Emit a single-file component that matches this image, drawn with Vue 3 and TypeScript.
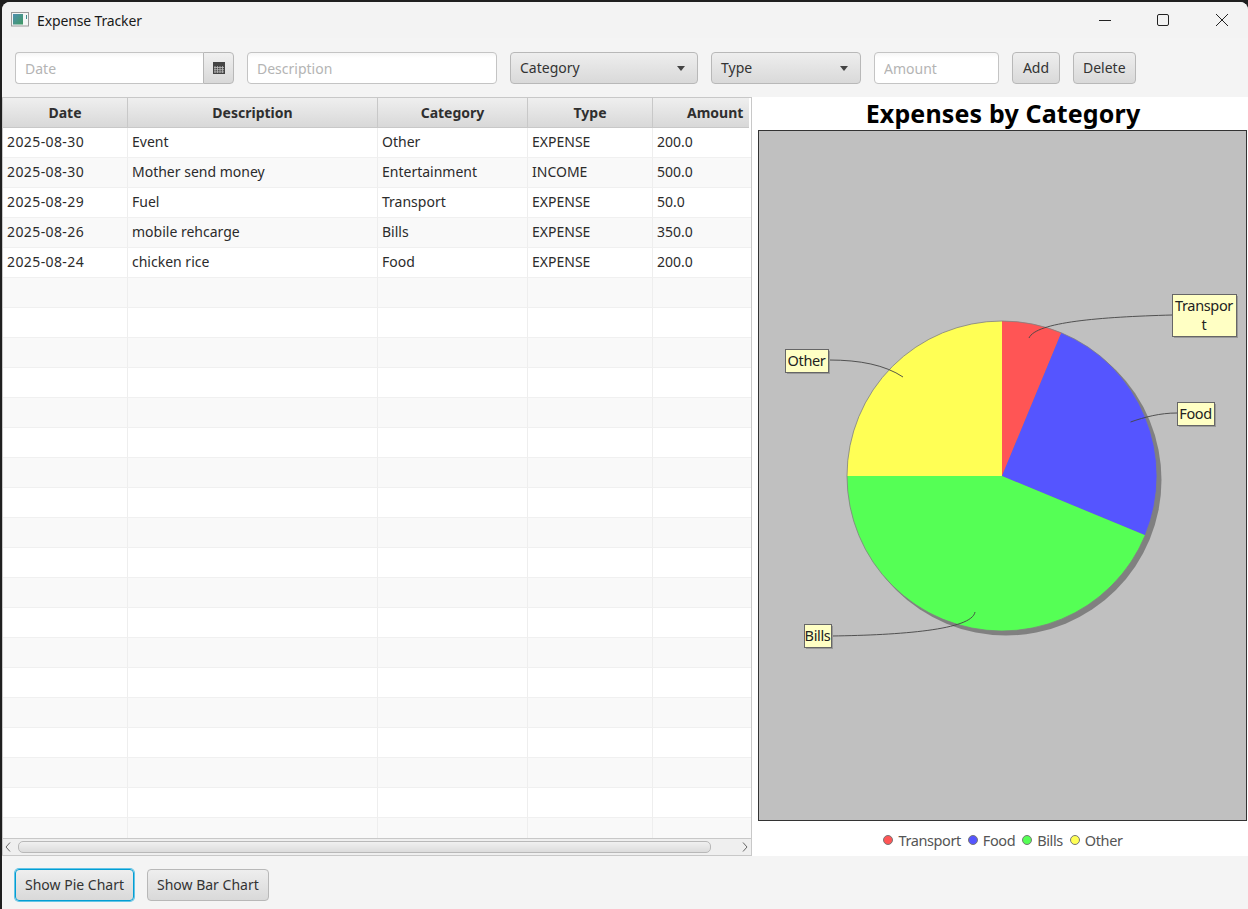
<template>
  <div class="window">
    <header class="titlebar">
      <svg class="app-icon" width="18" height="16" viewBox="0 0 18 16">
        <rect x="0.5" y="0.5" width="17" height="13.5" fill="#f4f6f6" stroke="#9a9a9a" />
        <defs>
          <linearGradient id="appfill" x1="0" y1="0" x2="1" y2="1">
            <stop offset="0" stop-color="#4f8fb0" />
            <stop offset="1" stop-color="#3f9a62" />
          </linearGradient>
        </defs>
        <rect x="2" y="2" width="10" height="10.5" fill="url(#appfill)" />
        <rect x="15" y="3" width="1" height="4" fill="#3f8a8a" />
      </svg>
      <span class="title">Expense Tracker</span>
      <div class="win-controls">
        <svg width="58" height="16" viewBox="0 0 58 16"><path d="M23 8.5h12" stroke="#222" fill="none" /></svg>
        <svg width="58" height="16" viewBox="0 0 58 16"><rect x="23.5" y="2.5" width="11" height="11" rx="1.5" stroke="#222" fill="none" /></svg>
        <svg width="58" height="16" viewBox="0 0 58 16"><path d="M24 2l12 12M36 2L24 14" stroke="#222" fill="none" /></svg>
      </div>
    </header>

    <div class="toolbar">
      <div class="date-picker">
        <input class="field date-input" placeholder="Date" />
        <button class="date-btn" aria-label="Pick date">
          <svg width="12" height="12" viewBox="0 0 12 12">
            <rect width="12" height="12" fill="#444" />
            <path d="M2 4v7M4.5 4v7M7 4v7M9.5 4v7M1 5.5h10M1 7.7h10M1 9.9h10" stroke="#bbb" stroke-width="0.8" />
          </svg>
        </button>
      </div>
      <input class="field desc" placeholder="Description" />
      <div class="combo cat">Category<span class="caret"></span></div>
      <div class="combo type">Type<span class="caret"></span></div>
      <input class="field amount" placeholder="Amount" />
      <button class="btn">Add</button>
      <button class="btn">Delete</button>
    </div>

    <main class="content">
      <section class="table">
        <div class="thead">
          <div v-for="c in columns" :key="c" class="th">{{ c }}</div>
        </div>
        <div class="tbody">
          <div v-for="(r, i) in rows" :key="i" class="tr" :class="{ odd: i % 2 === 1 }">
            <div v-for="(v, j) in r" :key="j" class="td" :class="{ 'td-date': j === 0 }">{{ v }}</div>
          </div>
        </div>
        <div class="hscroll">
          <svg class="arrow" width="8" height="10" viewBox="0 0 8 10"><path d="M6 0.5L2 5l4 4.5" stroke="#666" fill="none" /></svg>
          <div class="thumb"></div>
          <svg class="arrow" width="8" height="10" viewBox="0 0 8 10"><path d="M2 0.5L6 5 2 9.5" stroke="#666" fill="none" /></svg>
        </div>
      </section>

      <section class="chart">
        <h1 class="chart-title">Expenses by Category</h1>
        <svg class="plot" viewBox="758 130 489 691" width="489" height="691">
          <rect x="758.5" y="130.5" width="488" height="690" fill="#c0c0c0" stroke="#333" />
          <circle cx="1006" cy="480" r="155.5" fill="#808080" />
          <path v-for="s in slices" :key="s.name" :d="s.d" :fill="s.color" />
          <circle cx="1002" cy="476" r="155" fill="none" stroke="#808080" stroke-width="0.8" />
          <g fill="none" stroke="#444" stroke-width="0.9">
            <path d="M1029 338C1036 322 1100 317 1172 315" />
            <path d="M1130.5 422C1145 417 1160 413 1177 413" />
            <path d="M829 360C860 360 885 365 903 377" />
            <path d="M832 636C900 635 972 630 975 612" />
          </g>
          <g v-for="l in labels" :key="l.lines[0]">
            <rect :x="l.x + 2" :y="l.y + 2" :width="l.w" :height="l.h" fill="#999" />
            <rect :x="l.x + 0.5" :y="l.y + 0.5" :width="l.w" :height="l.h" fill="#ffffc4" stroke="#666" />
            <text v-for="(t, i) in l.lines" :key="t" class="label" :x="l.x + l.w / 2" :y="l.y + 17 + i * 19" text-anchor="middle">{{ t }}</text>
          </g>
        </svg>
        <div class="legend">
          <span v-for="s in slices" :key="s.name" class="legend-item">
            <i class="dot" :style="{ background: s.color }"></i>{{ s.name }}
          </span>
        </div>
      </section>
    </main>

    <footer class="bottom">
      <button class="btn focused">Show Pie Chart</button>
      <button class="btn">Show Bar Chart</button>
    </footer>
  </div>
</template>

<script setup lang="ts">
const columns = ['Date', 'Description', 'Category', 'Type', 'Amount']

const data: string[][] = [
  ['2025-08-30', 'Event', 'Other', 'EXPENSE', '200.0'],
  ['2025-08-30', 'Mother send money', 'Entertainment', 'INCOME', '500.0'],
  ['2025-08-29', 'Fuel', 'Transport', 'EXPENSE', '50.0'],
  ['2025-08-26', 'mobile rehcarge', 'Bills', 'EXPENSE', '350.0'],
  ['2025-08-24', 'chicken rice', 'Food', 'EXPENSE', '200.0'],
]
const rows: string[][] = [...data, ...Array.from({ length: 19 }, () => ['', '', '', '', ''])]

const parts = [
  { name: 'Transport', value: 50, color: '#ff5555' },
  { name: 'Food', value: 200, color: '#5555ff' },
  { name: 'Bills', value: 350, color: '#55ff55' },
  { name: 'Other', value: 200, color: '#ffff55' },
]

const cx = 1002
const cy = 476
const radius = 155
const total = parts.reduce((sum, p) => sum + p.value, 0)

let acc = 0
const slices = parts.map((p) => {
  const a0 = (acc / total) * Math.PI * 2
  acc += p.value
  const a1 = (acc / total) * Math.PI * 2
  const large = a1 - a0 > Math.PI ? 1 : 0
  const x0 = cx + radius * Math.sin(a0)
  const y0 = cy - radius * Math.cos(a0)
  const x1 = cx + radius * Math.sin(a1)
  const y1 = cy - radius * Math.cos(a1)
  return { ...p, d: `M${cx} ${cy}L${x0} ${y0}A${radius} ${radius} 0 ${large} 1 ${x1} ${y1}Z` }
})

const labels = [
  { lines: ['Transpor', 't'], x: 1172, y: 294, w: 64, h: 42 },
  { lines: ['Food'], x: 1177, y: 402, w: 37, h: 23 },
  { lines: ['Other'], x: 785, y: 349, w: 43, h: 23 },
  { lines: ['Bills'], x: 804, y: 624, w: 27, h: 23 },
]
</script>

<style>
html, body { background: #1f1f1f; }
</style>

<style scoped>
.window {
  margin: 2px 0 0 2px;
  height: 907px;
  display: flex;
  flex-direction: column;
  background: #f4f4f4;
  border-radius: 8px 8px 0 0;
  overflow: hidden;
  font-family: "Noto Sans", "Open Sans", sans-serif;
  font-size: 14px;
  color: #333;
}
.titlebar { height: 36px; flex: none; display: flex; align-items: center; background: #f3f3f3; padding-left: 9px; }
.app-icon { margin-right: 8px; }
.title { color: #1a1a1a; font-size: 14px; letter-spacing: -0.14px; }
.win-controls { margin-left: auto; display: flex; margin-right: -2px; }
.win-controls svg { display: block; }
.toolbar { flex: none; height: 59px; box-sizing: border-box; padding: 14px 0 13px 13px; display: flex; gap: 13px; }
.field, .combo, .btn, .date-btn { box-sizing: border-box; height: 32px; font: inherit; margin: 0; }
.field {
  border: 1px solid #c4c4c4;
  border-radius: 4px;
  padding: 0 9px;
  background: linear-gradient(#f6f6f6, #fff 5px);
  color: #333;
  outline: none;
}
.field::placeholder { color: #b4b4b4; opacity: 1; }
.date-picker { display: flex; width: 219px; }
.date-input { width: 188px; border-radius: 4px 0 0 4px; border-right: none; }
.date-btn {
  width: 31px;
  padding: 0;
  border: 1px solid #b8b8b8;
  border-radius: 0 4px 4px 0;
  background: linear-gradient(#f0f0f0, #d8d8d8);
  display: flex;
  align-items: center;
  justify-content: center;
}
.desc { width: 250px; }
.amount { width: 125px; }
.combo, .btn {
  border: 1px solid #b8b8b8;
  border-radius: 4px;
  background: linear-gradient(#eeeeee, #d9d9d9);
  color: #333;
}
.combo { display: flex; align-items: center; justify-content: space-between; padding: 0 12px 2px 9px; }
.caret { margin-top: 2px; }
.cat { width: 188px; }
.type { width: 150px; }
.caret { width: 0; height: 0; border-left: 4.5px solid transparent; border-right: 4.5px solid transparent; border-top: 5px solid #444; }
.btn { min-width: 48px; padding: 0 9px 2px; white-space: nowrap; }
.content { flex: 1; display: flex; min-height: 0; }
.table {
  width: 750px;
  flex: none;
  box-sizing: border-box;
  border: 1px solid #c8c8c8;
  display: flex;
  flex-direction: column;
  background: #fff;
}
.thead { display: grid; grid-template-columns: 125px 250px 150px 125px 96px; height: 30px; flex: none; overflow: hidden; margin-right: 2px; }
.th {
  display: flex;
  align-items: center;
  justify-content: center;
  font-weight: 700;
  color: #2f2f2f;
  background: linear-gradient(#efefef, #d8d8d8);
  border-right: 1px solid #c8c8c8;
  border-bottom: 1px solid #c8c8c8;
  box-sizing: border-box;
  white-space: nowrap;
}
.th:last-child { border-right: none; justify-content: flex-start; padding-left: 34px; overflow: hidden; }
.tbody { flex: 1; overflow: hidden; min-height: 0; }
.tr { display: grid; grid-template-columns: 125px 250px 150px 125px 98px; height: 30px; background: #fff; }
.tr.odd { background: #f9f9f9; }
.td {
  box-sizing: border-box;
  border-right: 1px solid #eeeeee;
  border-bottom: 1px solid #f0f0f0;
  padding: 0 4px 2px;
  display: flex;
  align-items: center;
  color: #2b2b2b;
  white-space: nowrap;
}
.td-date { letter-spacing: 0.4px; }
.td:last-child { border-right: none; }
.hscroll {
  height: 17px;
  flex: none;
  box-sizing: border-box;
  border-top: 1px solid #c8c8c8;
  background: #efefef;
  display: flex;
  align-items: center;
  padding: 0 2px 0 1px;
}
.arrow { flex: none; }
.thumb {
  width: 693px;
  height: 12px;
  margin: 0 auto 0 6px;
  box-sizing: border-box;
  border: 1px solid #b8b8b8;
  border-radius: 5px;
  background: linear-gradient(#f0f0f0, #dcdcdc);
}
.chart { flex: 1; min-width: 0; background: #fff; display: flex; flex-direction: column; padding: 0 0 0 6px; }
.chart-title { margin: 0; height: 33px; flex: none; font-size: 25px; line-height: 33px; letter-spacing: 0.15px; font-weight: 700; color: #000; text-align: center; white-space: nowrap; }
.plot { display: block; flex: none; }
.label { font-size: 14.5px; letter-spacing: -0.35px; fill: #222; }
.legend { flex: 1; display: flex; align-items: center; justify-content: center; gap: 7px; padding-top: 3px; font-size: 14.5px; letter-spacing: -0.4px; color: #555; }
.legend-item { display: flex; align-items: center; gap: 5px; }
.dot { width: 10px; height: 10px; border-radius: 50%; border: 0.5px solid #777; box-sizing: border-box; }
.bottom { flex: none; height: 53px; box-sizing: border-box; padding: 13px 0 8px 13px; display: flex; gap: 13px; }
.focused { border: 1px solid #039ed3; box-shadow: 0 0 0 1px #64c4e6; }
</style>
